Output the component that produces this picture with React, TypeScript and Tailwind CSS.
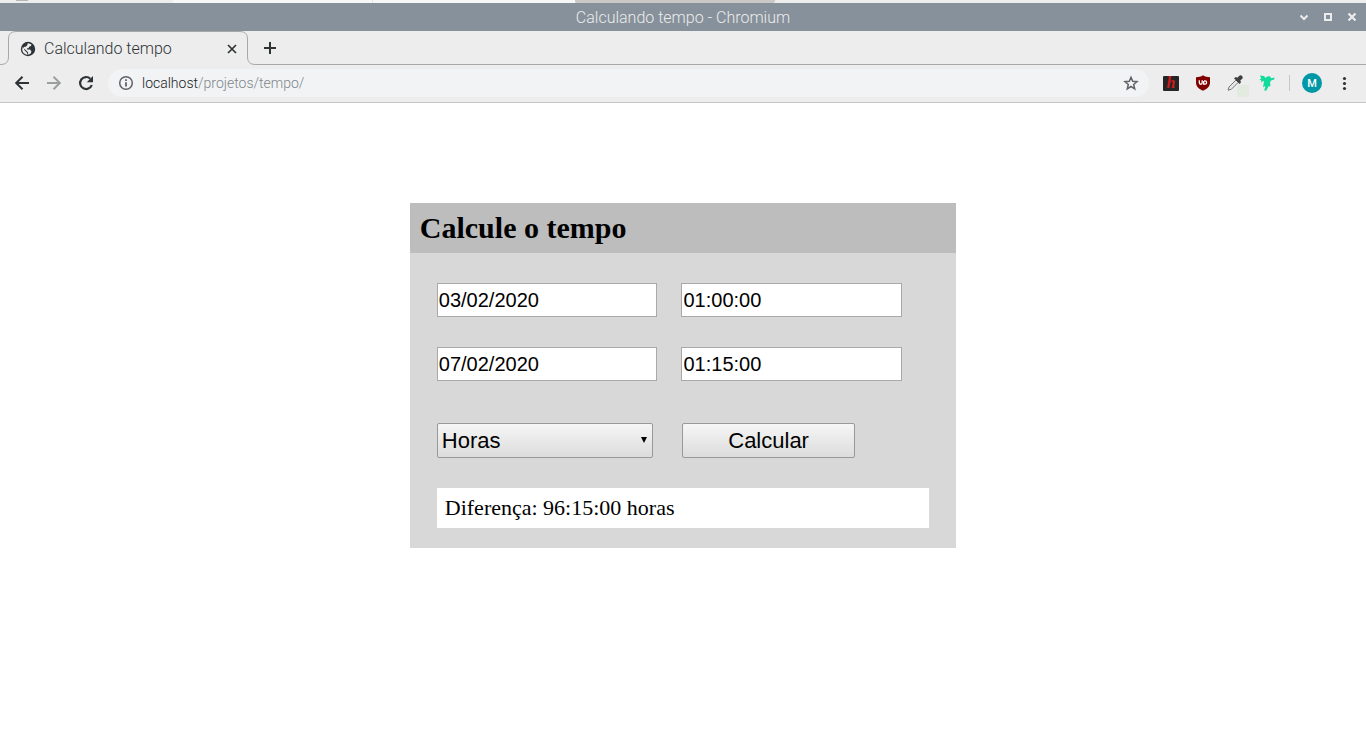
import { useState } from "react";

function TaskbarEdge() {
  return (
    <div className="flex h-[3px] bg-[#ededed]">
      <div className="w-[173px] pl-4">
        <div className="h-px w-3 bg-[#b5b5b5]" />
      </div>
      <div className="w-[200px] border-r border-[#e3e3e3] bg-[#f7f7f7]" />
      <div className="w-[202px] bg-[#f7f7f7]" />
      <div className="w-[200px] rounded-b-xs bg-[#cbc7c4]" />
    </div>
  );
}

function TitleBar() {
  return (
    <header className="grid h-7 grid-cols-[1fr_auto_1fr] items-center bg-[#87919b] text-[#ececec]">
      <span />
      <span className="pt-0.5 text-base font-light">Calculando tempo - Chromium</span>
      <div className="flex items-center justify-end gap-2 pr-1.5">
        <button aria-label="Minimizar" className="h-4 w-4">
          <svg viewBox="0 0 16 16" className="h-4 w-4" fill="none" stroke="currentColor" strokeWidth="2">
            <path d="M4.500 6.500 8 10l3.500-3.500" />
          </svg>
        </button>
        <button aria-label="Maximizar" className="h-4 w-4">
          <svg viewBox="0 0 16 16" className="h-4 w-4" fill="none" stroke="currentColor" strokeWidth="2">
            <path d="M5 5h6v6H5z" />
          </svg>
        </button>
        <button aria-label="Fechar janela" className="h-4 w-4">
          <svg viewBox="0 0 16 16" className="h-4 w-4" fill="none" stroke="currentColor" strokeWidth="2.200">
            <path d="m4.500 4.500 7 7m0-7-7 7" />
          </svg>
        </button>
      </div>
    </header>
  );
}

function TabStrip() {
  return (
    <div className="flex h-[34px] bg-[#ededed]">
      <svg viewBox="0 0 16 34" className="h-[34px] w-4 shrink-0" fill="none" stroke="#a8a8a8">
        <path d="M0 33.500h1Q8.500 33.500 8.500 26V8Q8.500 .5 16 .5" />
      </svg>
      <div className="flex w-56 items-center border-t border-[#a8a8a8] pl-1">
        <svg viewBox="0 0 16 16" className="h-4 w-4">
          <circle cx="8" cy="8" r="7.200" fill="#2e3436" />
          <path
            d="M7.800 2.300 9 2.400l2.500 1.200-.6 1.400-1.800.7-.6 1.500H7v1.300h3l1.400 1.700-.5 2L9 13.600l-1.200-.3.400-1.800-1.700-1.700L2.500 6.300l-.3 2.500A5.900 5.900 0 0 0 7.500 13.900L7 11.800 4.300 9.100 3.500 6l2-.2 1.500-1z"
            fill="#ededed"
          />
        </svg>
        <span className="ml-2 flex-1 text-base font-light text-[#2e3436]">Calculando tempo</span>
        <button aria-label="Fechar aba" className="text-[#2e3436]">
          <svg viewBox="0 0 16 16" className="h-4 w-4" fill="none" stroke="currentColor" strokeWidth="1.700">
            <path d="m4 4 8 8m0-8-8 8" />
          </svg>
        </button>
      </div>
      <svg viewBox="0 0 16 34" className="h-[34px] w-4 shrink-0" fill="none" stroke="#a8a8a8">
        <path d="M0 .5Q7.500 .5 7.500 8v18Q7.500 33.500 15 33.500h1" />
      </svg>
      <div className="flex flex-1 items-center border-b border-[#a8a8a8] pl-1">
        <button aria-label="Nova aba" className="text-[#2e3436]">
          <svg viewBox="0 0 20 20" className="h-5 w-5" fill="none" stroke="currentColor" strokeWidth="2">
            <path d="M10 4v12M4 10h12" />
          </svg>
        </button>
      </div>
    </div>
  );
}

function Extensions() {
  return (
    <div className="flex items-center gap-4 text-[#2e3436]">
      <div className="flex h-[15px] w-4 items-center justify-center rounded-[1px] bg-[#252525] font-['Liberation_Serif',serif] text-base leading-4 font-bold text-[#cf1b1b] italic">
        h
      </div>
      <svg viewBox="0 0 16 16" className="h-4 w-4">
        <path d="M8 .3C10 1.800 12.500 2.200 15 2.200v5.300c0 4-3 6.500-7 8.300-4-1.800-7-4.300-7-8.300V2.200c2.500 0 5-.4 7-1.900z" fill="#800000" />
        <path d="M4.300 5.300v2.500a1.400 1.400 0 0 0 2.900 0V5.300M9 5.900h1a1.600 1.600 0 0 1 0 3.200H8.700V6" fill="none" stroke="#fff" strokeWidth="1.300" />
      </svg>
      <svg viewBox="0 0 16 16" className="h-4 w-4 overflow-visible">
        <rect x="10" y="10" width="12" height="12" rx="2" fill="#e3eadf" />
        <path d="M1 15.200 2 12l7-7 2.300 2.300-7 7z" fill="#e8e8e8" stroke="#777" />
        <path d="M7 3.200 8.800 2l1.500.8L12.300.7q1.700-1 2.800.3t.4 2.600L13.300 5.500l.7 1.800-1.500 1.700z" fill="#3f3f3f" />
      </svg>
      <svg viewBox="0 0 16 16" className="h-4 w-4">
        <path
          d="m1 .5 4 .5 1.500 2L8 1.500l3-.3 1 2 3.500-.7-.3 2-3.200 1L11 7.500l.5 3-1.500 1.500-.5-1-2 4.500H5l1.200-3-.5-1.500-1.700 1.500.5-3L5 6 3 6.500 2 8l.3-2.500L.3 4.300l2-.5z"
          fill="#12dc9c"
        />
      </svg>
    </div>
  );
}

function Toolbar() {
  return (
    <div className="flex h-[38px] items-center border-b border-[#c6c6c6] bg-[#ededed] px-3 pb-px text-[#2e3436]">
      <div className="flex items-center gap-3">
        <button aria-label="Voltar">
          <svg viewBox="0 0 20 20" className="h-5 w-5" fill="none" stroke="currentColor" strokeWidth="2">
            <path d="M17 10H4.500M10.500 3.700 4.200 10l6.300 6.300" />
          </svg>
        </button>
        <button aria-label="Avançar" className="text-[#9c9e9f]">
          <svg viewBox="0 0 20 20" className="h-5 w-5" fill="none" stroke="currentColor" strokeWidth="2">
            <path d="M3 10h12.500M9.500 3.700l6.300 6.300-6.300 6.300" />
          </svg>
        </button>
        <button aria-label="Recarregar">
          <svg viewBox="0 0 20 20" className="h-5 w-5">
            <path d="M14.300 5.700A6 6 0 1 0 15.800 12" fill="none" stroke="currentColor" strokeWidth="2.200" />
            <path d="M17 3v6.200h-6.200z" fill="currentColor" />
          </svg>
        </button>
      </div>
      <div className="ml-3 flex h-7 flex-1 items-center rounded-full bg-[#f1f3f4] px-2.5 text-[#5f6368]">
        <svg viewBox="0 0 16 16" className="h-4 w-4">
          <circle cx="8" cy="8" r="6.300" fill="none" stroke="currentColor" strokeWidth="1.500" />
          <path d="M7.100 7.200h1.800v4.300H7.100zM7.100 4.300h1.800v1.800H7.100z" fill="currentColor" />
        </svg>
        <a href="#inicio" className="ml-2 flex-1 text-sm font-light text-[#80868b]">
          <span className="text-[#202124]">localhost</span>/projetos/tempo/
        </a>
        <button aria-label="Favoritar">
          <svg viewBox="0 0 16 16" className="h-4 w-4" fill="none" stroke="currentColor" strokeWidth="1.500">
            <path d="m8 2.300 1.700 4 4.300.4-3.300 2.800 1 4.300L8 11.500l-3.700 2.300 1-4.300L2 6.700l4.300-.4z" />
          </svg>
        </button>
      </div>
      <div className="ml-3.5 flex items-center">
        <Extensions />
        <div className="ml-3.5 h-4 w-px bg-[#c4c6c8]" />
        <button
          aria-label="Perfil"
          className="ml-3 flex h-5 w-5 items-center justify-center rounded-full bg-[#0097a7] pt-px text-[11px] leading-5 font-medium text-white"
        >
          M
        </button>
        <button aria-label="Menu" className="ml-3">
          <svg viewBox="0 0 20 20" className="h-5 w-5" fill="currentColor">
            <circle cx="10.500" cy="5.500" r="1.600" />
            <circle cx="10.500" cy="10.500" r="1.600" />
            <circle cx="10.500" cy="15.500" r="1.600" />
          </svg>
        </button>
      </div>
    </div>
  );
}

const fieldClass =
  "h-[34px] w-full border border-[#a9a9a9] bg-white px-px font-['Liberation_Sans',sans-serif] text-xl text-black";
const controlClass =
  "h-[35px] rounded-xs border border-[#999] bg-linear-to-b from-[#f6f6f6] to-[#dcdcdc] font-['Liberation_Sans',sans-serif] text-[22px] leading-7 text-black";

function Calculator() {
  const [startDate, setStartDate] = useState("03/02/2020");
  const [startTime, setStartTime] = useState("01:00:00");
  const [endDate, setEndDate] = useState("07/02/2020");
  const [endTime, setEndTime] = useState("01:15:00");

  return (
    <section className="mx-auto mt-[100px] w-2/5 bg-[#d8d8d8] font-['Liberation_Serif',serif] text-black">
      <h1 className="bg-[#bdbdbd] px-2.5 py-[5px] text-3xl leading-10 font-bold">Calcule o tempo</h1>
      <form className="px-[27px] pt-[30px] pb-5" onSubmit={(event) => event.preventDefault()}>
        <div className="mr-[27px] grid grid-cols-2 gap-x-6 gap-y-[30px]">
          <input aria-label="Data inicial" className={fieldClass} value={startDate} onChange={(e) => setStartDate(e.target.value)} />
          <input aria-label="Hora inicial" className={fieldClass} value={startTime} onChange={(e) => setStartTime(e.target.value)} />
          <input aria-label="Data final" className={fieldClass} value={endDate} onChange={(e) => setEndDate(e.target.value)} />
          <input aria-label="Hora final" className={fieldClass} value={endTime} onChange={(e) => setEndTime(e.target.value)} />
        </div>
        <div className="mt-[42px] flex gap-[29px]">
          <div className="grid w-[44%]">
            <select aria-label="Unidade" className={`${controlClass} col-start-1 row-start-1 w-full appearance-none pl-1`}>
              <option>Horas</option>
              <option>Minutos</option>
              <option>Segundos</option>
            </select>
            <svg viewBox="0 0 6 6" className="pointer-events-none col-start-1 row-start-1 mr-1.5 mb-0.5 h-1.5 w-1.5 self-center justify-self-end">
              <path d="M0 0h6L3 6z" />
            </svg>
          </div>
          <button type="submit" className={`${controlClass} w-[35%]`}>
            Calcular
          </button>
        </div>
        <output className="mt-[30px] block bg-white px-2 py-1.5 text-[22px] leading-7">Diferença: 96:15:00 horas</output>
      </form>
    </section>
  );
}

export default function App() {
  return (
    <div className="min-h-screen bg-white font-[Roboto,sans-serif]">
      <TaskbarEdge />
      <TitleBar />
      <TabStrip />
      <Toolbar />
      <main className="flow-root">
        <Calculator />
      </main>
    </div>
  );
}
